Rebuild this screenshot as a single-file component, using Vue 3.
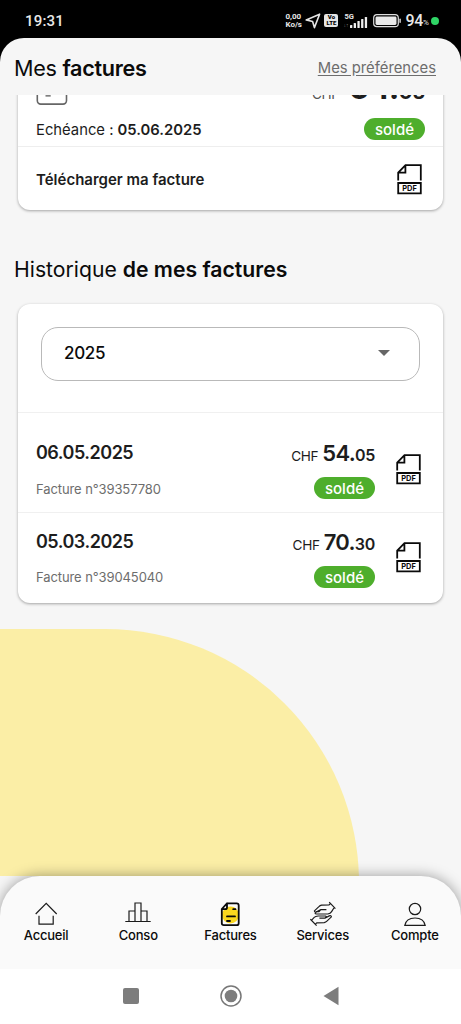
<script setup>
const bills = [
  { date: '06.05.2025', number: '39357780', whole: '54.', cents: '05' },
  { date: '05.03.2025', number: '39045040', whole: '70.', cents: '30' },
]
const bars = [3, 5, 7, 9, 11]
</script>

<template>
  <div class="screen">
    <div class="status">
      <span class="clock">19:31</span>
      <div class="indicators">
        <div class="rate"><span>0,00</span><span>Ko/s</span></div>
        <svg class="plane" width="16" height="16" viewBox="0 0 16 16"><path d="M14.6 1.2 9.4 14.6 7.6 8.5 1.2 6.9Z" /></svg>
        <div class="volte"><span>Vo</span><span>LTE</span></div>
        <div class="network">
          <span class="gen">5G</span>
          <span class="arrows">↓↑</span>
          <svg width="18" height="12" viewBox="0 0 18 12"><rect v-for="(h, i) in bars" :key="i" :x="i * 3.7" :y="12 - h" width="2.3" :height="h" rx=".6" fill="#eee" /></svg>
        </div>
        <svg class="battery" width="28" height="14" viewBox="0 0 28 14">
          <rect x=".7" y=".7" width="24.6" height="12" rx="3.2" fill="none" stroke="#ddd" stroke-width="1.2" />
          <rect x="2.5" y="2.5" width="21" height="8.4" rx="1.4" fill="#e9e9e9" />
          <rect x="26.4" y="4.6" width="1.4" height="4.4" rx=".7" fill="#ddd" />
        </svg>
        <span class="level">94</span><span class="pct">%</span>
        <i class="dot"></i>
      </div>
    </div>

    <div class="app">
      <header class="header">
        <h1 class="title">Mes <b>factures</b></h1>
        <a class="prefs">Mes préférences</a>
      </header>

      <main class="content">
        <section class="card current">
          <div class="current-top">
            <svg class="bill-icon" width="32" height="34" viewBox="0 0 32 34"><rect x="1.3" y="1.1" width="29.2" height="32" rx="3.5" fill="none" stroke="#666" stroke-width="1.6" /><path d="M9.5 24.8h5.2" stroke="#555" stroke-width="1.3" /></svg>
            <div class="amount amount-cut"><span class="cur">CHF</span><span class="whole">54.</span><span class="cents">05</span></div>
          </div>
          <div class="due">
            <span class="due-text">Echéance : <b>05.06.2025</b></span>
            <span class="badge">soldé</span>
          </div>
          <div class="download">
            <span class="download-text">Télécharger ma facture</span>
            <svg class="pdf" width="25" height="31" viewBox="0 0 25 31"><path d="M1.2 16.5V8.7L8.5 1.2h15.3v15.3M1.4 8.7h7V1.4M1.2 19h22.6v10.4H1.2Z" /><text x="12.5" y="27.1" textLength="14.6" lengthAdjust="spacingAndGlyphs">PDF</text></svg>
          </div>
        </section>

        <h2 class="subtitle">Historique <b>de mes factures</b></h2>

        <section class="card history">
          <div class="filter">
            <div class="select"><span>2025</span><i class="caret"></i></div>
          </div>
          <div v-for="b in bills" :key="b.number" class="bill">
            <div class="bill-main">
              <span class="date">{{ b.date }}</span>
              <span class="number">Facture n°{{ b.number }}</span>
            </div>
            <div class="bill-side">
              <div class="amount"><span class="cur">CHF</span><span class="whole">{{ b.whole }}</span><span class="cents">{{ b.cents }}</span></div>
              <span class="badge">soldé</span>
            </div>
            <svg class="pdf" width="25" height="31" viewBox="0 0 25 31"><path d="M1.2 16.5V8.7L8.5 1.2h15.3v15.3M1.4 8.7h7V1.4M1.2 19h22.6v10.4H1.2Z" /><text x="12.5" y="27.1" textLength="14.6" lengthAdjust="spacingAndGlyphs">PDF</text></svg>
          </div>
        </section>
        <div class="shape"></div>
      </main>
    </div>

    <div class="nav-wrap">
      <nav class="nav">
        <a class="item accueil">
          <svg width="26" height="26" viewBox="0 0 26 26"><path d="M2.7 13 13.2 2.4 23.7 13M6 14.7v8.4h14.2v-8.4" /></svg>
          <span>Accueil</span>
        </a>
        <a class="item conso">
          <svg width="26" height="26" viewBox="0 0 26 26"><path d="M.3 20.5h25.4M4 20.5V10h6v10.5M10 20.5V2h6v18.5M16 10h6v10.5" /></svg>
          <span>Conso</span>
        </a>
        <a class="item factures">
          <svg width="26" height="26" viewBox="0 0 26 26"><circle cx="13.5" cy="14" r="8.5" fill="#fad71e" stroke="none" /><path class="heavy" d="M10 2.4h9.7q2 0 2 2v17.8q0 2-2 2H6.8q-2 0-2-2V8L10 2.4v4q0 1.7-1.7 1.7H4.9" /><path class="heavy" d="M16.2 8.2h2.2M10 15.4h8M10 20h3" /></svg>
          <span>Factures</span>
        </a>
        <a class="item services">
          <svg width="26" height="26" viewBox="0 0 26 26"><path d="M19.2 1.2 25.4 7.6M20.4 2.6 19 4l-7.4.2q-1.6.3-2.7 1.5L4.4 9.9q.3 1.8 2.2 1l4.2-2.3h5.6M10.8 8.6 9 10.6H6.4Q3.8 12.9 6.6 13h11.2q2.6-.4 3.8-2.4L23.9 7M6.6 24.6.4 18.2M5.4 23.2l1.4-1.4 7.4-.2q1.6-.3 2.7-1.5l4.5-4.2q-.3-1.8-2.2-1L15 17.2H9.4M15 17.2l1.8-2M8 15q-2.6.4-3.8 1.4L1.9 18.8M8 15h8" /></svg>
          <span>Services</span>
        </a>
        <a class="item compte">
          <svg width="26" height="26" viewBox="0 0 26 26"><circle cx="13" cy="8" r="5.7" /><path d="M2.8 24.4Q4.2 17 13 17t10.2 7.4Z" /></svg>
          <span>Compte</span>
        </a>
      </nav>
    </div>

    <div class="system">
      <svg width="16" height="16" viewBox="0 0 16 16"><rect width="16" height="16" rx="2" fill="#7d7d7d" /></svg>
      <svg width="22" height="22" viewBox="0 0 22 22"><circle cx="11" cy="11" r="10" fill="none" stroke="#777" stroke-width="1.5" /><circle cx="11" cy="11" r="6.3" fill="#7d7d7d" /></svg>
      <svg width="16" height="20" viewBox="0 0 16 20"><path d="M.5 10 15.5.7v18.6Z" fill="#7d7d7d" /></svg>
    </div>
  </div>
</template>

<style>
body { margin: 0; background: #000; }
</style>

<style scoped>
* { box-sizing: border-box; }
.screen { width: 461px; height: 1024px; display: flex; flex-direction: column; background: #000; overflow: hidden; font-family: Inter, "Liberation Sans", sans-serif; color: #1d1d1d; }
.status { height: 38px; flex: none; display: flex; justify-content: space-between; align-items: center; padding: 3px 22px 0 25px; color: #e8e8e8; font-family: Roboto, sans-serif; }
.clock { font-size: 15px; font-weight: 500; letter-spacing: .2px; }
.indicators { display: flex; align-items: center; }
.rate { display: flex; flex-direction: column; font-size: 8px; line-height: 7.5px; font-weight: 700; width: 17px; }
.plane { margin-left: 3px; fill: none; stroke: #e4e4e4; stroke-width: 1.6; stroke-linejoin: round; }
.volte { margin-left: 3px; width: 14px; height: 13px; border-radius: 2px; background: #e5e5e5; color: #000; display: flex; flex-direction: column; align-items: center; font-size: 6px; line-height: 6px; font-weight: 900; }
.network { position: relative; width: 25px; height: 15px; margin-left: 5px; display: flex; justify-content: flex-end; align-items: flex-end; }
.gen { position: absolute; left: 1px; top: 0; font-size: 7.5px; line-height: 7px; font-weight: 700; }
.arrows { position: absolute; left: 0; bottom: 0; font-size: 5px; line-height: 6px; color: #777; }
.battery { margin-left: 5px; }
.level { margin-left: 4px; font-size: 16px; font-weight: 500; letter-spacing: -.3px; }
.pct { font-size: 8px; margin-top: 4px; width: 6px; }
.dot { width: 8px; height: 8px; border-radius: 50%; background: #2fd566; margin-left: 2px; }

.app { height: 838px; flex: none; background: #f6f6f6; border-radius: 24px 24px 0 0; overflow: hidden; display: flex; flex-direction: column; }
.header { height: 57px; flex: none; display: flex; justify-content: space-between; align-items: center; padding: 2px 25px 0 14px; }
.title, .subtitle { margin: 0; font-weight: 400; color: #0b0b0b; }
.title { font-size: 21.6px; letter-spacing: -.3px; }
.title b, .subtitle b { font-weight: 600; }
.prefs { font-size: 14.8px; color: #6d6d6d; text-decoration: underline; text-underline-offset: 2px; }
.content { flex: 1; overflow: hidden; display: flex; flex-direction: column; }
.card { flex: none; margin: 0 18px; background: #fff; border-radius: 12px; box-shadow: 0 1px 3px rgba(0, 0, 0, .34); }
.current { height: 145px; margin-top: -30px; padding-top: 6px; }
.current-top { height: 36px; display: flex; justify-content: space-between; padding: 0 18px; }
.due { height: 40px; display: flex; justify-content: space-between; align-items: center; padding: 5px 18px 0; border-bottom: 1px solid #eee; font-size: 14.8px; }
.due-text { padding-top: 2px; }
.due b { font-weight: 600; }
.download { height: 63px; display: flex; justify-content: space-between; align-items: center; padding: 1px 21px 0 18px; font-size: 15px; font-weight: 600; }
.badge { width: 61px; height: 22px; border-radius: 11px; background: #4eae2c; color: #fff; font-size: 15px; font-weight: 500; line-height: 24px; text-align: center; }
.pdf { flex: none; fill: none; stroke: #0a0a0a; stroke-width: 1.8; }
.pdf text { stroke: none; fill: #0a0a0a; font: 700 7.6px Inter, sans-serif; text-anchor: middle; }
.subtitle { font-size: 21.2px; height: 94px; line-height: 118px; margin-left: 14px; flex: none; white-space: nowrap; }
.history { height: 299px; }
.filter { height: 109px; border-bottom: 1px solid #f0f0f0; padding: 23px 23px 0; }
.select { height: 54px; border: 1px solid #b9b9b9; border-radius: 17px; display: flex; align-items: center; justify-content: space-between; padding: 0 29px 2px 22px; font-size: 17px; font-weight: 500; letter-spacing: -.3px; color: #0b0b0b; }
.caret { border: 6px solid transparent; border-top-color: #666; border-bottom: 0; }
.bill { height: 100px; display: flex; align-items: flex-start; padding: 28px 22px 0 18px; border-bottom: 1px solid #f0f0f0; }
.bill:last-child { height: 90px; padding-top: 16.5px; border-bottom: 0; }
.bill-main { flex: 1; display: flex; flex-direction: column; }
.date { font-size: 18px; font-weight: 600; line-height: 24px; letter-spacing: -.5px; }
.number { font-size: 13px; line-height: 20px; margin-top: 14px; color: #6d6d6d; letter-spacing: -.1px; }
.bill:last-child .number { margin-top: 13px; }
.bill-side { display: flex; flex-direction: column; align-items: flex-end; margin-right: 21px; }
.amount { display: flex; align-items: baseline; line-height: 24px; height: 24px; white-space: nowrap; }
.cur { font-size: 13.6px; margin-right: 4px; letter-spacing: -.3px; }
.whole { font-size: 22px; font-weight: 600; letter-spacing: -.7px; }
.cents { font-size: 16px; font-weight: 600; letter-spacing: -.3px; }
.bill-side .badge { margin-top: 12px; }
.bill .pdf { margin-top: 12.5px; }
.amount-cut { padding-top: 5px; }
.amount-cut .cur { font-size: 13.6px; color: #555; margin-right: 10px; }
.amount-cut .whole { font-size: 32px; font-weight: 700; }
.amount-cut .cents { font-size: 20.5px; font-weight: 700; }
.shape { flex: none; width: 359px; height: 254px; margin-top: 26px; background: #fbeea6; border-top-right-radius: 254px; }

.nav-wrap { height: 93px; flex: none; background: #f6f6f6; }
.nav { position: relative; height: 93px; background: #fafafa; border-radius: 40px 40px 0 0; box-shadow: 0 0 14px rgba(0, 0, 0, .38); display: grid; grid-template-columns: repeat(5, 1fr); }
.item { display: flex; flex-direction: column; align-items: center; padding-top: 25px; font-size: 13px; font-weight: 500; letter-spacing: -.2px; color: #0b0b0b; }
.item svg { fill: none; stroke: #1b1b1b; stroke-width: 1.2; flex: none; }
.item .heavy { stroke: #0a0a0a; stroke-width: 1.8; stroke-linecap: round; stroke-linejoin: round; }
.item span { line-height: 17px; }
.system { position: relative; height: 55px; flex: none; background: #fff; display: flex; justify-content: center; align-items: center; gap: 81px; padding: 0 0 2px; }
</style>
